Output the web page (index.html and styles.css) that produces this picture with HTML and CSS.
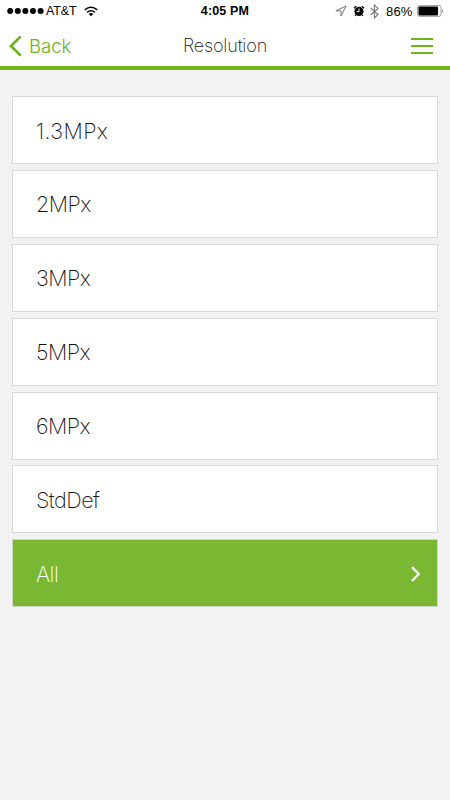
FILE: index.html
```html
<!DOCTYPE html>
<html lang="en">
<head>
<meta charset="utf-8">
<title>Resolution</title>
<link rel="stylesheet" href="styles.css">
</head>
<body>
<div class="status">
  <div class="carrier">
    <svg class="signal" width="38" height="8" viewBox="0 0 38 8"><circle cx="3.2" cy="4" r="3"/><circle cx="10.8" cy="4" r="3"/><circle cx="18.4" cy="4" r="3"/><circle cx="26" cy="4" r="3"/><circle cx="33.6" cy="4" r="3"/></svg>
    <span class="network">AT&amp;T</span>
    <svg class="wifi" width="14" height="11" viewBox="0 0 14 11"><path d="M.8 3.9Q7-1.5 13.2 3.9M3.1 6.3Q7 3.1 10.9 6.3" fill="none" stroke="#000" stroke-width="1.5"/><path d="M4.8 8Q7 6.2 9.2 8L7 10.3Z"/></svg>
  </div>
  <div class="time">4:05 PM</div>
  <div class="indicators">
    <svg width="12" height="12" viewBox="0 0 12 12"><path d="M11 1L.9 5.8H6V11Z" fill="none" stroke="#777" stroke-width="1"/></svg>
    <svg class="alarm" width="12" height="12" viewBox="0 0 12 12"><circle cx="6" cy="6.4" r="4.6"/><path d="M1 3.2L3.3 1.2M11 3.2L8.7 1.2M2.8 10L2 11M9.2 10L10 11" stroke="#000" stroke-width="1.2"/><path d="M6 3.5V6.7H3.6" fill="none" stroke="#fff" stroke-width="1"/></svg>
    <svg class="bluetooth" width="9" height="15" viewBox="0 0 9 15"><path d="M.7 4L8 10.5L4.4 14V1L8 4.4L.7 11" fill="none" stroke="#777" stroke-width="1.1"/></svg>
    <span class="percent">86%</span>
    <svg class="battery" width="27" height="12" viewBox="0 0 27 12"><rect x=".5" y=".6" width="23.5" height="10.8" rx="2" fill="none" stroke="#888" stroke-width=".8"/><rect x="1.5" y="1.6" width="19.5" height="8.8" rx=".8"/><path d="M25 4Q26.8 6 25 8Z" fill="#555"/></svg>
  </div>
</div>
<header class="nav">
  <a class="back"><svg width="14" height="22" viewBox="0 0 14 22"><path d="M11.7 1.4L2 11L11.7 20.6" fill="none" stroke="#6ab417" stroke-width="2.7"/></svg><span class="back-label">Back</span></a>
  <h1 class="title">Resolution</h1>
  <div class="menu"><i></i><i></i><i></i></div>
</header>
<main class="list">
  <div class="item"><span class="decimal">1.3MPx</span></div>
  <div class="item"><span>2MPx</span></div>
  <div class="item"><span>3MPx</span></div>
  <div class="item"><span>5MPx</span></div>
  <div class="item"><span>6MPx</span></div>
  <div class="item"><span>StdDef</span></div>
  <div class="item selected"><span>All</span><svg width="10" height="16" viewBox="0 0 10 16"><path d="M1 1.1L7.9 8L1 14.9" fill="none" stroke="#fff" stroke-width="2.2"/></svg></div>
</main>
</body>
</html>
```

FILE: styles.css
```css
* { box-sizing: border-box; }
body { margin: 0; width: 450px; height: 800px; overflow: hidden; background: #f2f2f2; color: #111; font-family: Inter, "Liberation Sans", sans-serif; font-weight: 300; }
svg { display: block; flex: none; }
.status { height: 22px; background: #fff; display: grid; grid-template-columns: 1fr auto 1fr; align-items: center; color: #000; font-size: 12px; line-height: 22px; white-space: nowrap; }
.carrier { display: flex; align-items: center; padding-left: 7px; }
.network { width: 31px; margin-left: 1px; padding-top: 1px; font: 12.5px/21px "Liberation Sans", sans-serif; letter-spacing: -.15px; }
.wifi { margin-left: 7px; }
.time { padding-top: 1px; font: bold 12.5px/21px "Liberation Sans", sans-serif; letter-spacing: .15px; }
.indicators { display: flex; align-items: center; justify-content: flex-end; padding-right: 6px; }
.alarm { margin-left: 6px; }
.bluetooth { margin-left: 5px; }
.percent { margin-left: 7px; padding-top: 1px; width: 27px; font: 13px/21px "Liberation Sans", sans-serif; letter-spacing: .2px; }
.battery { margin-left: 4px; }
.nav { height: 48px; padding-top: 3px; background: #fff; border-bottom: 4px solid #72b71c; display: grid; grid-template-columns: 1fr auto 1fr; align-items: center; }
.back { display: flex; align-items: center; gap: 6px; padding-left: 9px; color: #6ab417; font-size: 18.5px; }
.title { margin: 0; font-size: 18px; font-weight: 200; line-height: 41px; letter-spacing: -.15px; }
.menu { justify-self: end; margin-right: 17px; width: 22px; height: 16px; display: flex; flex-direction: column; justify-content: space-between; }
.menu i { height: 2px; background: #6db51a; }
.list { padding: 26px 12px 0; display: grid; gap: 5.9px; }
.item { height: 68px; padding: 1px 16px 0 23px; border: 1px solid #d9d9d9; background: #fff; display: flex; align-items: center; justify-content: space-between; font-size: 21.5px; font-weight: 200; letter-spacing: -.5px; }
.decimal { letter-spacing: .4px; }
.selected { background: #7ab834; color: #fff; border-color: #cfd8c5; }
```
